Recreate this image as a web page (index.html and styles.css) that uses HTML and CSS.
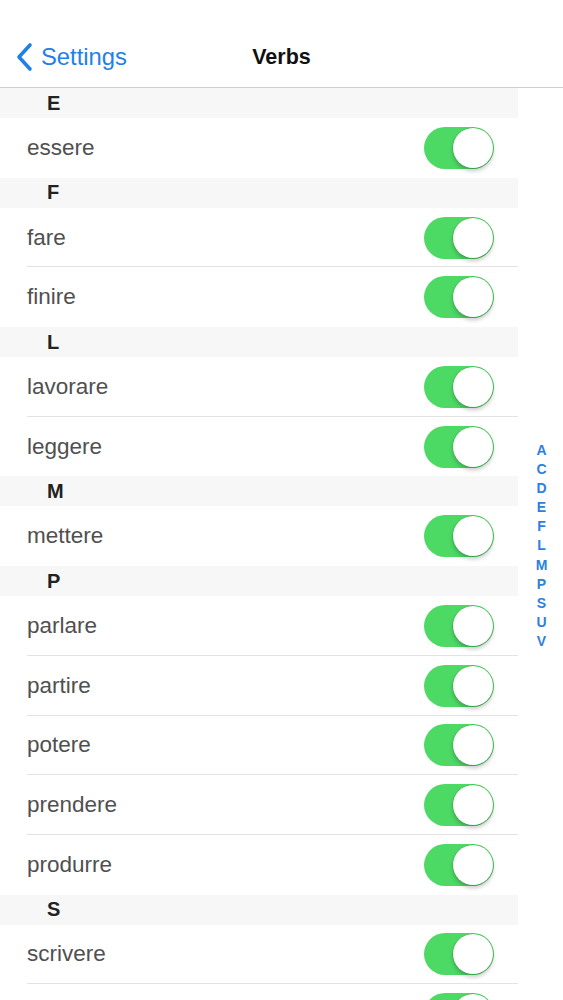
FILE: index.html
```html
<!DOCTYPE html>
<html>
<head>
<meta charset="utf-8">
<link rel="stylesheet" href="styles.css">
</head>
<body>
<header class="navbar">
  <div class="back">
    <svg class="chevron" width="18" height="30" viewBox="0 0 18 30"><path d="M15 3 L4 15 L15 27" fill="none" stroke="#1f80e8" stroke-width="3.6" stroke-linecap="round" stroke-linejoin="round"/></svg>
    <span>Settings</span>
  </div>
  <div class="title">Verbs</div>
</header>
<div class="content">
  <div class="list">
    <div class="section">E</div>
    <div class="row last"><span>essere</span><span class="toggle"><span class="knob"></span></span></div>
    <div class="section">F</div>
    <div class="row"><span>fare</span><span class="toggle"><span class="knob"></span></span></div>
    <div class="row last"><span>finire</span><span class="toggle"><span class="knob"></span></span></div>
    <div class="section">L</div>
    <div class="row"><span>lavorare</span><span class="toggle"><span class="knob"></span></span></div>
    <div class="row last"><span>leggere</span><span class="toggle"><span class="knob"></span></span></div>
    <div class="section">M</div>
    <div class="row last"><span>mettere</span><span class="toggle"><span class="knob"></span></span></div>
    <div class="section">P</div>
    <div class="row"><span>parlare</span><span class="toggle"><span class="knob"></span></span></div>
    <div class="row"><span>partire</span><span class="toggle"><span class="knob"></span></span></div>
    <div class="row"><span>potere</span><span class="toggle"><span class="knob"></span></span></div>
    <div class="row"><span>prendere</span><span class="toggle"><span class="knob"></span></span></div>
    <div class="row last"><span>produrre</span><span class="toggle"><span class="knob"></span></span></div>
    <div class="section">S</div>
    <div class="row"><span>scrivere</span><span class="toggle"><span class="knob"></span></span></div>
    <div class="row"><span></span><span class="toggle"><span class="knob"></span></span></div>
  </div>
  <nav class="index">
    <span>A</span><span>C</span><span>D</span><span>E</span><span>F</span><span>L</span><span>M</span><span>P</span><span>S</span><span>U</span><span>V</span>
  </nav>
</div>
</body>
</html>
```

FILE: styles.css
```css
html, body {
  margin: 0;
  padding: 0;
  background: #ffffff;
  font-family: "Liberation Sans", Arial, sans-serif;
}
.navbar {
  height: 87px;
  border-bottom: 1px solid #cfcfd3;
  display: flex;
  align-items: flex-end;
  position: relative;
  background: #ffffff;
}
.back {
  display: flex;
  align-items: center;
  height: 60px;
  padding-left: 15px;
  color: #1f80e8;
  font-size: 23.8px;
  gap: 8px;
}
.title {
  position: absolute;
  left: 0;
  right: 0;
  bottom: 0;
  height: 60px;
  display: flex;
  align-items: center;
  justify-content: center;
  font-weight: bold;
  font-size: 21.5px;
  color: #111;
  pointer-events: none;
}
.content {
  display: flex;
  height: 912px;
  overflow: hidden;
}
.list {
  width: 518px;
  flex: none;
}
.section {
  height: 30px;
  background: #f7f7f7;
  padding-left: 47px;
  font-weight: bold;
  font-size: 20px;
  color: #222;
  display: flex;
  align-items: center;
}
.row {
  height: 59.7px;
  box-sizing: border-box;
  display: flex;
  align-items: center;
  justify-content: space-between;
  padding: 0 24px 0 27px;
  font-size: 22.5px;
  color: #505050;
  position: relative;
}
.row::after {
  content: "";
  position: absolute;
  left: 27px;
  right: 0;
  bottom: 0;
  height: 1px;
  background: #e3e3e6;
}
.row.last::after {
  display: none;
}
.toggle {
  width: 70px;
  height: 42px;
  border-radius: 21px;
  background: #4cd964;
  position: relative;
  flex: none;
}
.knob {
  position: absolute;
  right: 1px;
  top: 1px;
  width: 40px;
  height: 40px;
  border-radius: 50%;
  background: #ffffff;
  box-shadow: 0 3px 4px rgba(0, 0, 0, 0.22), 0 0 0 0.5px rgba(0, 80, 0, 0.25);
}
.index {
  flex: 1;
  display: flex;
  flex-direction: column;
  justify-content: center;
  align-items: center;
  padding-top: 4px;
  padding-left: 2px;
  color: #2d7fe0;
  font-weight: bold;
  font-size: 14px;
  line-height: 19.1px;
}
```
